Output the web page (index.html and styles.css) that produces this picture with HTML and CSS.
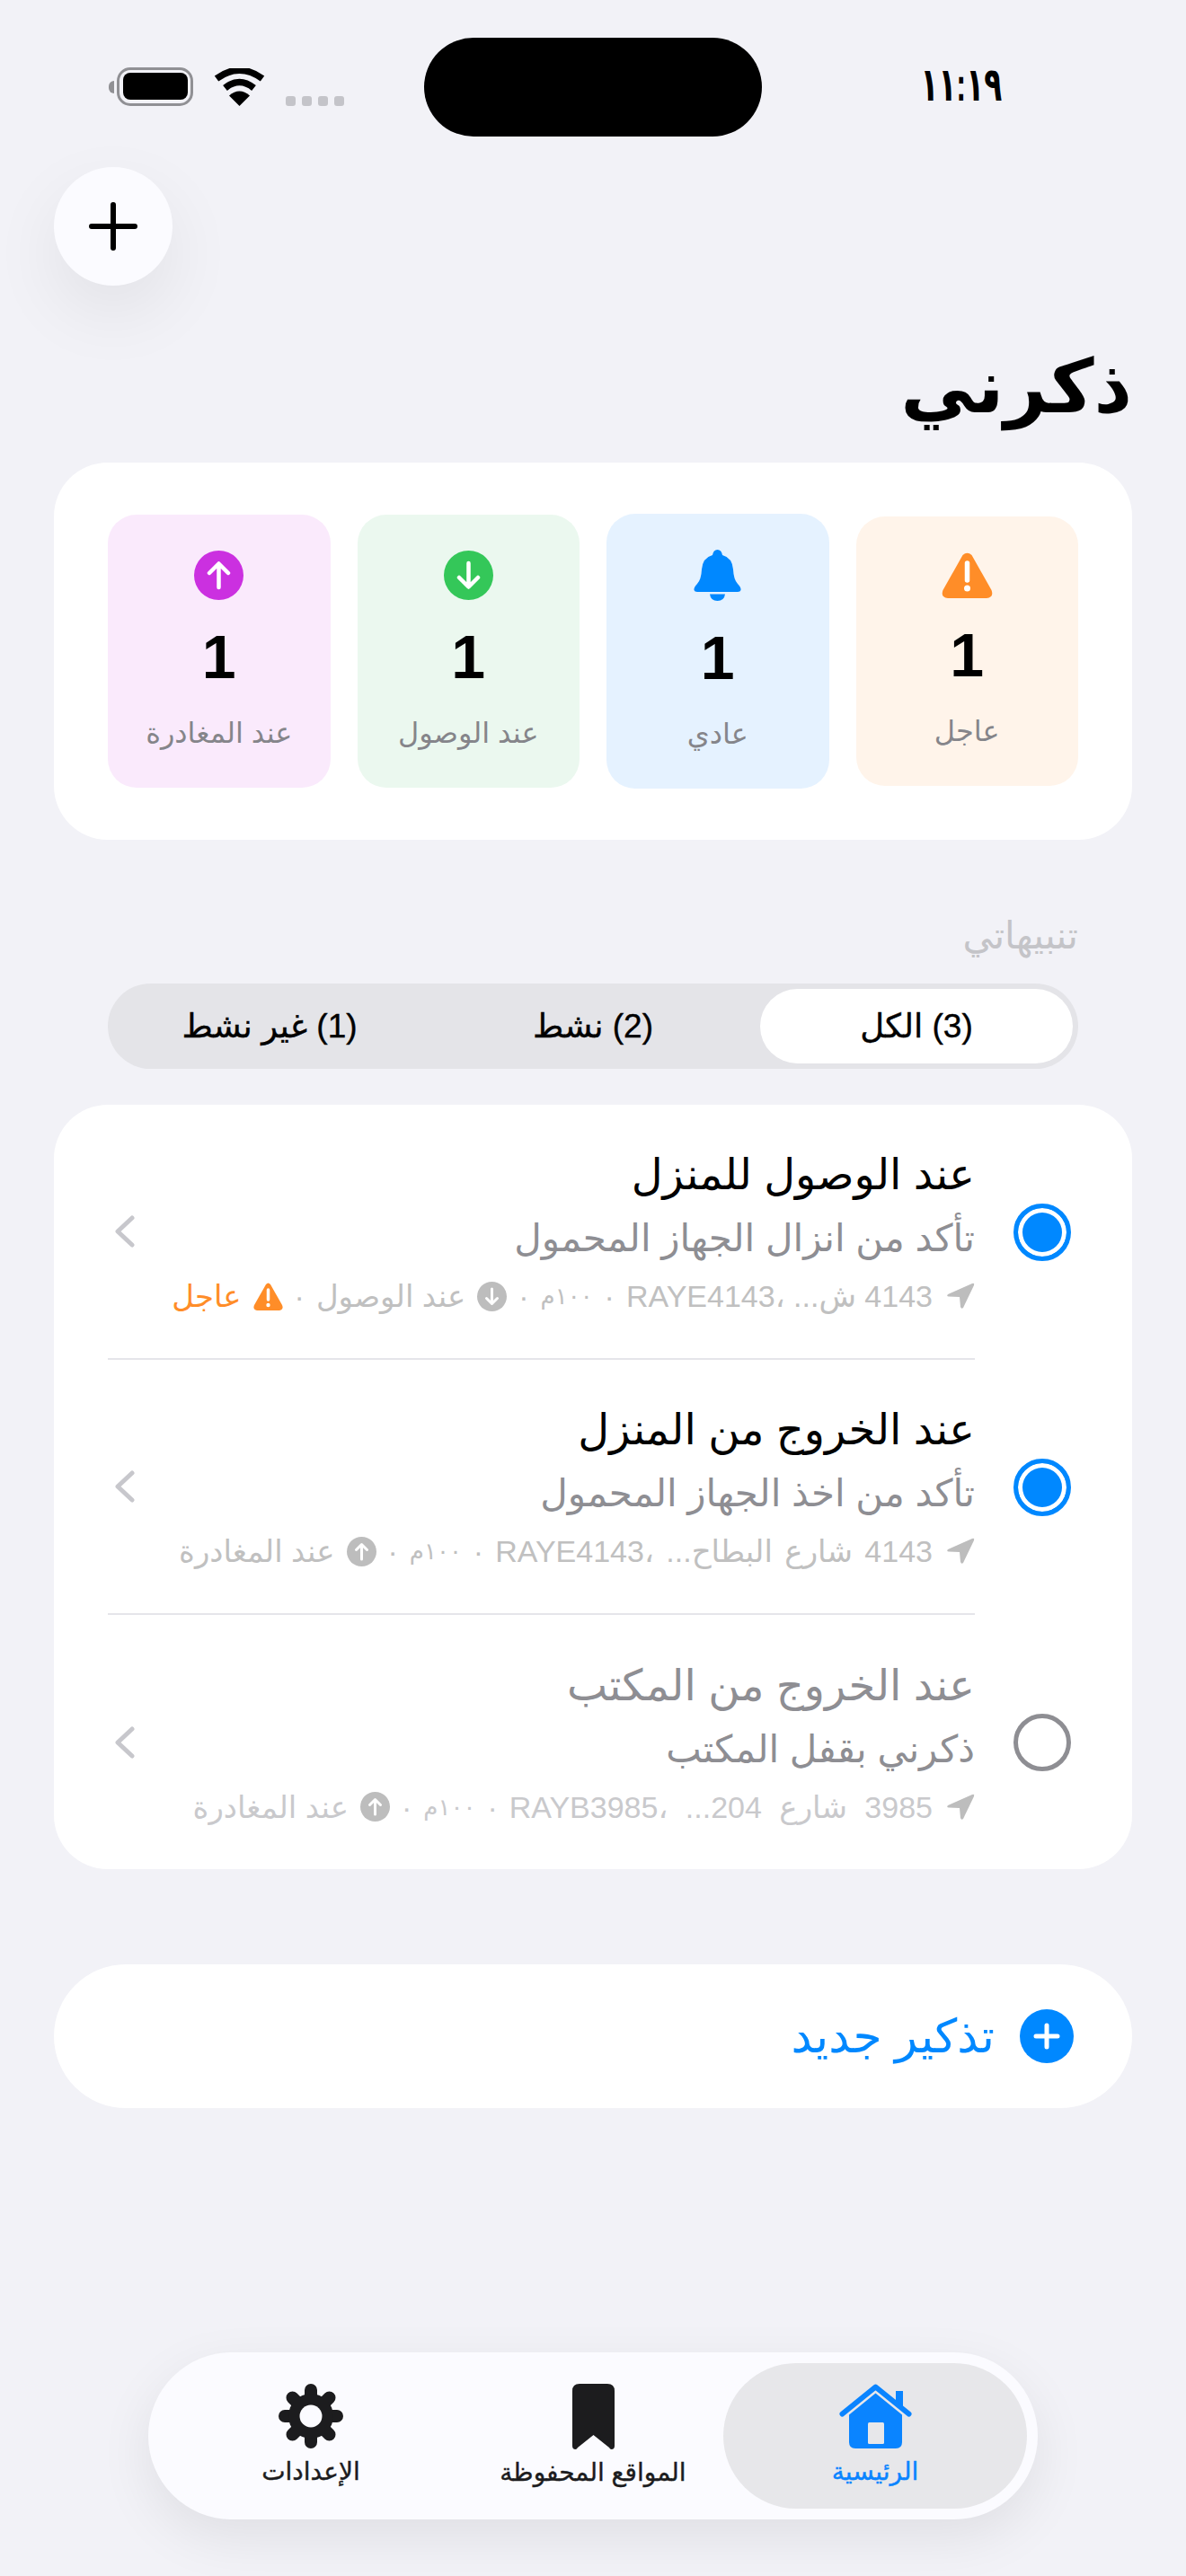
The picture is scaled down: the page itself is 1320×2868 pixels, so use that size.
FILE: index.html
```html
<!DOCTYPE html>
<html lang="ar" dir="rtl">
    <head>
        <meta charset="UTF-8" />
        <title>ذكرني</title>
        <link rel="stylesheet" href="styles.css">
    </head>
    <body>
        <div class="status-bar">
            <div class="status-time">١١:١٩</div>
            <div class="island"></div>
            <div class="status-icons">
                <div class="signal"><i></i><i></i><i></i><i></i></div>
                <svg class="wifi" width="57" height="42" viewBox="0 0 57 42">
                    <path d="M28.5 42 L17 30.5 Q28.5 20.5 40 30.5Z" />
                    <path d="M12.5 22 Q28.5 9 44.5 22" class="wifi-arc" />
                    <path d="M3 11.5 Q28.5 -7 54 11.5" class="wifi-arc" />
                </svg>
                <div class="battery"><div class="battery-level"></div></div>
                <div class="battery-cap"></div>
            </div>
        </div>

        <div class="page">
            <div class="top-row">
                <button type="button" class="round-btn">
                    <svg width="54" height="54" viewBox="0 0 54 54"><path d="M27 3V51M3 27H51" stroke="#000" stroke-width="6" stroke-linecap="round" /></svg>
                </button>
            </div>
            <h1 class="page-title">ذكرني</h1>

            <div class="card stats">
                <div class="tile tile-urgent">
                    <svg class="tile-icon" width="57" height="51" viewBox="0 0 57 51">
                        <path d="M23.5 3 Q28.500 -1.500 33.500 3 L55.500 42 Q58.500 50 50 51 H7 Q-1.500 50 1.500 42Z" fill="#ff8d28" />
                        <path d="M28.500 12V31" stroke="#fff" stroke-width="5.500" stroke-linecap="round" />
                        <circle cx="28.500" cy="40" r="3.500" fill="#fff" />
                    </svg>
                    <div class="tile-num">1</div>
                    <div class="tile-label">عاجل</div>
                </div>
                <div class="tile tile-normal">
                    <svg class="tile-icon" width="53" height="57" viewBox="0 0 53 57">
                        <path d="M26.500 0 Q31 0 32 6 Q43 9 44 22 Q44.500 33 49 38 Q53 42 52.500 45 Q52 47 49 47 H4 Q1 47 .5 45 Q0 42 4 38 Q8.500 33 9 22 Q10 9 21 6 Q22 0 26.500 0Z" fill="#0088ff" />
                        <path d="M18 49.500H35Q34 57 26.500 57T18 49.500Z" fill="#0088ff" />
                    </svg>
                    <div class="tile-num">1</div>
                    <div class="tile-label">عادي</div>
                </div>
                <div class="tile tile-arrive">
                    <svg class="tile-icon" width="55" height="55" viewBox="0 0 55 55">
                        <circle cx="27.500" cy="27.500" r="27.500" fill="#34c759" />
                        <path d="M27.500 14V40M17 30L27.500 40.500L38 30" fill="none" stroke="#fff" stroke-width="4.500" stroke-linecap="round" stroke-linejoin="round" />
                    </svg>
                    <div class="tile-num">1</div>
                    <div class="tile-label">عند الوصول</div>
                </div>
                <div class="tile tile-leave">
                    <svg class="tile-icon" width="55" height="55" viewBox="0 0 55 55">
                        <circle cx="27.500" cy="27.500" r="27.500" fill="#cb30e0" />
                        <path d="M27.500 41V15M17 25L27.500 14.500L38 25" fill="none" stroke="#fff" stroke-width="4.500" stroke-linecap="round" stroke-linejoin="round" />
                    </svg>
                    <div class="tile-num">1</div>
                    <div class="tile-label">عند المغادرة</div>
                </div>
            </div>

            <h2 class="section-title">تنبيهاتي</h2>
            <div class="tabs">
                <div class="tab tab-active">(3) الكل</div>
                <div class="tab">(2) نشط</div>
                <div class="tab">(1) غير نشط</div>
            </div>

            <div class="card list">
                <div class="row">
                    <div class="radio radio-on"></div>
                    <div class="row-body">
                        <div class="row-text">
                            <div class="row-title">عند الوصول للمنزل</div>
                            <div class="row-sub">تأكد من انزال الجهاز المحمول</div>
                            <div class="row-meta">
                                <svg class="loc" width="32" height="30" viewBox="0 0 32 30"><path d="M29 1 L2 13 Q0 15 3 15.500 L15 16 L16 27 Q17 30 19 28 L31 3 Q32 0 29 1Z" /></svg>
                                <span>4143 ش... ،RAYE4143</span>
                                <span>·</span>
                                <span class="meta-time">١٠٠م</span>
                                <span>·</span>
                                <svg class="dir" width="33" height="33" viewBox="0 0 33 33"><circle cx="16.500" cy="16.500" r="16.500" /><path d="M16.500 8V24M10.500 18.500L16.500 24.500L22.500 18.500" class="dir-arrow" /></svg>
                                <span>عند الوصول</span>
                                <span>·</span>
                                <svg width="33" height="31" viewBox="0 0 33 31"><path d="M14 2 Q16.500 -1 19 2 L32 25 Q34 30 29 31 H4 Q-1 30 1 25Z" fill="#ff8d28" /><path d="M16.500 8V19" stroke="#fff" stroke-width="3.500" stroke-linecap="round" /><circle cx="16.500" cy="25" r="2.200" fill="#fff" /></svg>
                                <span class="urgent">عاجل</span>
                            </div>
                        </div>
                        <svg class="chevron" width="23" height="36" viewBox="0 0 23 36"><path d="M20 3L4 18L20 33" /></svg>
                    </div>
                </div>
                <div class="row">
                    <div class="radio radio-on"></div>
                    <div class="row-body">
                        <div class="row-text">
                            <div class="row-title">عند الخروج من المنزل</div>
                            <div class="row-sub">تأكد من اخذ الجهاز المحمول</div>
                            <div class="row-meta">
                                <svg class="loc" width="32" height="30" viewBox="0 0 32 30"><path d="M29 1 L2 13 Q0 15 3 15.500 L15 16 L16 27 Q17 30 19 28 L31 3 Q32 0 29 1Z" /></svg>
                                <span class="addr-mid">4143 شارع البطاح... ،RAYE4143</span>
                                <span>·</span>
                                <span class="meta-time">١٠٠م</span>
                                <span>·</span>
                                <svg class="dir" width="33" height="33" viewBox="0 0 33 33"><circle cx="16.500" cy="16.500" r="16.500" /><path d="M16.500 25V9M10.500 14.500L16.500 8.500L22.500 14.500" class="dir-arrow" /></svg>
                                <span>عند المغادرة</span>
                            </div>
                        </div>
                        <svg class="chevron" width="23" height="36" viewBox="0 0 23 36"><path d="M20 3L4 18L20 33" /></svg>
                    </div>
                </div>
                <div class="row row-off">
                    <div class="radio"></div>
                    <div class="row-body">
                        <div class="row-text">
                            <div class="row-title">عند الخروج من المكتب</div>
                            <div class="row-sub">ذكرني بقفل المكتب</div>
                            <div class="row-meta">
                                <svg class="loc" width="32" height="30" viewBox="0 0 32 30"><path d="M29 1 L2 13 Q0 15 3 15.500 L15 16 L16 27 Q17 30 19 28 L31 3 Q32 0 29 1Z" /></svg>
                                <span class="addr-wide">3985 شارع 204... ،RAYB3985</span>
                                <span>·</span>
                                <span class="meta-time">١٠٠م</span>
                                <span>·</span>
                                <svg class="dir" width="33" height="33" viewBox="0 0 33 33"><circle cx="16.500" cy="16.500" r="16.500" /><path d="M16.500 25V9M10.500 14.500L16.500 8.500L22.500 14.500" class="dir-arrow" /></svg>
                                <span>عند المغادرة</span>
                            </div>
                        </div>
                        <svg class="chevron" width="23" height="36" viewBox="0 0 23 36"><path d="M20 3L4 18L20 33" /></svg>
                    </div>
                </div>
            </div>

            <div class="card new-btn">
                <svg width="60" height="60" viewBox="0 0 60 60">
                    <circle cx="30" cy="30" r="30" fill="#0088ff" />
                    <path d="M30 18V42M18 30H42" stroke="#fff" stroke-width="5" stroke-linecap="round" />
                </svg>
                <span>تذكير جديد</span>
            </div>

            <div class="nav">
                <div class="nav-item nav-active">
                    <svg width="81" height="72" viewBox="0 0 81 72">
                        <path d="M63 8H71V25H63Z" fill="#0a84ff" />
                        <path d="M3.500 33.500L40.500 3.500L77.500 33.500" fill="none" stroke="#0a84ff" stroke-width="6" stroke-linecap="round" stroke-linejoin="round" />
                        <path d="M11 34.500L40.500 10.500L70 34.500V65Q70 72 63 72H18Q11 72 11 65Z" fill="#0a84ff" />
                        <rect x="32" y="43" width="18" height="24" rx="1.500" fill="#e7e7ea" />
                    </svg>
                    <span>الرئيسية</span>
                </div>
                <div class="nav-item">
                    <svg width="47" height="73" viewBox="0 0 47 73">
                        <path d="M0 8Q0 0 8 0H39Q47 0 47 8V69Q47 73 43.500 73Q42 73 41 71L23.500 57L6 71Q5 73 3.500 73Q0 73 0 69Z" fill="#1c1c1e" />
                    </svg>
                    <span>المواقع المحفوظة</span>
                </div>
                <div class="nav-item">
                    <svg width="72" height="72" viewBox="0 0 72 72">
                        <path d="M36 7V65M7 36H65M15.500 15.500L56.500 56.500M56.500 15.500L15.500 56.500" stroke="#1c1c1e" stroke-width="14" stroke-linecap="round" />
                        <circle cx="36" cy="36" r="25" fill="#1c1c1e" />
                        <circle cx="36" cy="36" r="12.500" fill="#fbfbff" />
                    </svg>
                    <span>الإعدادات</span>
                </div>
            </div>
        </div>
    </body>
</html>
```

FILE: styles.css
```css
* {
    box-sizing: border-box;
}

body {
    margin: 0;
    height: 2868px;
    overflow: hidden;
    color: #000;
    background-color: #f2f2f7;
    font-family: "Liberation Sans", "DejaVu Sans", sans-serif;
}

/* status bar */
.status-bar {
    display: grid;
    grid-template-columns: 472px 376px 472px;
    align-items: center;
    padding-top: 42px;
}

.status-time {
    justify-self: start;
    margin: 0 205px 6px 0;
    font-size: 52px;
    font-weight: 700;
    line-height: 104px;
    transform: scaleX(0.63);
    transform-origin: right center;
}

.island {
    height: 110px;
    border-radius: 55px;
    background-color: #000;
}

.status-icons {
    display: flex;
    align-items: flex-end;
    height: 43px;
    margin-bottom: 2px;
    padding-right: 89px;
}

.signal {
    display: flex;
    gap: 7px;
    margin-left: 23px;
}

.signal i {
    width: 11px;
    height: 11px;
    border-radius: 3px;
    background-color: #c4c4c9;
}

.wifi {
    margin-left: 23px;
}

.wifi path {
    fill: #000;
}

.wifi .wifi-arc {
    fill: none;
    stroke: #000;
    stroke-width: 7.500px;
}

.battery {
    width: 85px;
    height: 43px;
    padding: 3.500px;
    border: 3.500px solid #909094;
    border-radius: 15px;
}

.battery-level {
    height: 100%;
    border-radius: 8px;
    background-color: #000;
}

.battery-cap {
    width: 6px;
    height: 14px;
    margin: 0 3px 14px 0;
    border-radius: 6px 0 0 6px;
    background-color: #909094;
}

/* page */
.page {
    padding: 34px 60px 0;
}

.top-row {
    display: flex;
    justify-content: flex-end;
}

.round-btn {
    display: flex;
    align-items: center;
    justify-content: center;
    width: 132px;
    height: 132px;
    padding: 0;
    border: 0;
    border-radius: 50%;
    background-color: #fbfbff;
    box-shadow: 0 30px 80px rgba(0, 0, 0, 0.07);
}

.page-title {
    margin: 48px 0 0;
    font-size: 83px;
    font-weight: 700;
    line-height: 130px;
}

.card {
    border-radius: 60px;
    background-color: #fff;
}

/* counters */
.stats {
    display: flex;
    align-items: center;
    gap: 30px;
    height: 420px;
    margin-top: 19px;
    padding: 0 60px;
}

.tile {
    display: flex;
    flex: 1;
    flex-direction: column;
    align-items: center;
    justify-content: center;
    height: 304px;
    border-radius: 32px;
}

.tile-urgent {
    height: 300px;
    background-color: #fff4ea;
}

.tile-normal {
    height: 306px;
    background-color: #e5f2ff;
}

.tile-arrive {
    background-color: #ebf8ef;
}

.tile-leave {
    background-color: #faeafc;
}

.tile-icon {
    display: block;
}

.tile-num {
    margin-top: 23px;
    font-size: 68px;
    font-weight: 700;
    line-height: 80px;
}

.tile-label {
    margin-top: 23px;
    color: #85858a;
    font-size: 32px;
    line-height: 44px;
}

/* tabs */
.section-title {
    margin: 82px 0 0;
    padding-right: 60px;
    color: #c4c4c8;
    font-size: 42px;
    font-weight: 500;
    line-height: 50px;
}

.tabs {
    display: flex;
    gap: 12px;
    width: 1080px;
    height: 95px;
    margin: 28px 60px 0;
    padding: 6px;
    border-radius: 48px;
    background-color: #e4e4e8;
}

.tab {
    flex: 1;
    border-radius: 42px;
    font-size: 37px;
    font-weight: 500;
    line-height: 83px;
    text-align: center;
    -webkit-text-stroke: 0.4px #000;
}

.tab-active {
    background-color: #fff;
}

/* reminders */
.list {
    margin-top: 40px;
    padding: 0 68px 0 60px;
}

.row {
    display: flex;
    align-items: center;
    gap: 43px;
}

.radio {
    flex: none;
    width: 64px;
    height: 64px;
    border: 5px solid #8e8e93;
    border-radius: 50%;
}

.radio-on {
    border-color: #0088ff;
    background-color: #0088ff;
    box-shadow: inset 0 0 0 5px #fff;
}

.row-body {
    display: flex;
    flex: 1;
    align-items: center;
    justify-content: space-between;
    height: 284px;
    padding-left: 7px;
    border-bottom: 2px solid #e5e5ea;
}

.row:last-child .row-body {
    height: 283px;
    border-bottom: 0;
}

.row-title {
    font-size: 48px;
    line-height: 73px;
}

.row-sub {
    color: #8e8e93;
    font-size: 42px;
    line-height: 70px;
}

.row-meta {
    display: flex;
    align-items: center;
    gap: 13px;
    margin-top: 1px;
    color: #c0c0c0;
    font-size: 34px;
    line-height: 56px;
}

.meta-time {
    font-size: 26px;
    letter-spacing: -6px;
}

.addr-mid {
    word-spacing: 4px;
}

.addr-wide {
    word-spacing: 10px;
}

.loc {
    margin-left: 2px;
    fill: #bdbdbd;
}

.dir {
    fill: #bdbdbd;
}

.dir-arrow {
    fill: none;
    stroke: #fff;
    stroke-width: 3;
    stroke-linecap: round;
    stroke-linejoin: round;
}

.urgent {
    color: #ff8d28;
}

.chevron {
    flex: none;
    fill: none;
    stroke: #c7c7cc;
    stroke-width: 5;
    stroke-linecap: round;
    stroke-linejoin: round;
}

.row-off .row-title {
    color: #8e8e93;
}

.row-off .row-meta {
    color: #c9c9cc;
}

/* new reminder */
.new-btn {
    display: flex;
    align-items: center;
    gap: 28px;
    height: 160px;
    margin-top: 106px;
    padding: 0 65px;
    border-radius: 80px;
    color: #0088ff;
    font-size: 52px;
}

/* bottom nav */
.nav {
    display: grid;
    grid-template-columns: 338px 1fr 338px;
    width: 990px;
    height: 186px;
    margin: 272px 105px 0 0;
    padding: 12px;
    border-radius: 93px;
    background-color: #fbfbff;
    box-shadow: 0 20px 60px rgba(0, 0, 0, 0.08);
}

.nav-item {
    display: flex;
    flex-direction: column;
    align-items: center;
    gap: 9px;
    padding-top: 23px;
    border-radius: 81px;
    color: #1c1c1e;
    font-size: 28px;
    font-weight: 500;
    -webkit-text-stroke: 0.4px currentColor;
}

.nav-active {
    color: #0a84ff;
    background-color: #e7e7ea;
}
```
